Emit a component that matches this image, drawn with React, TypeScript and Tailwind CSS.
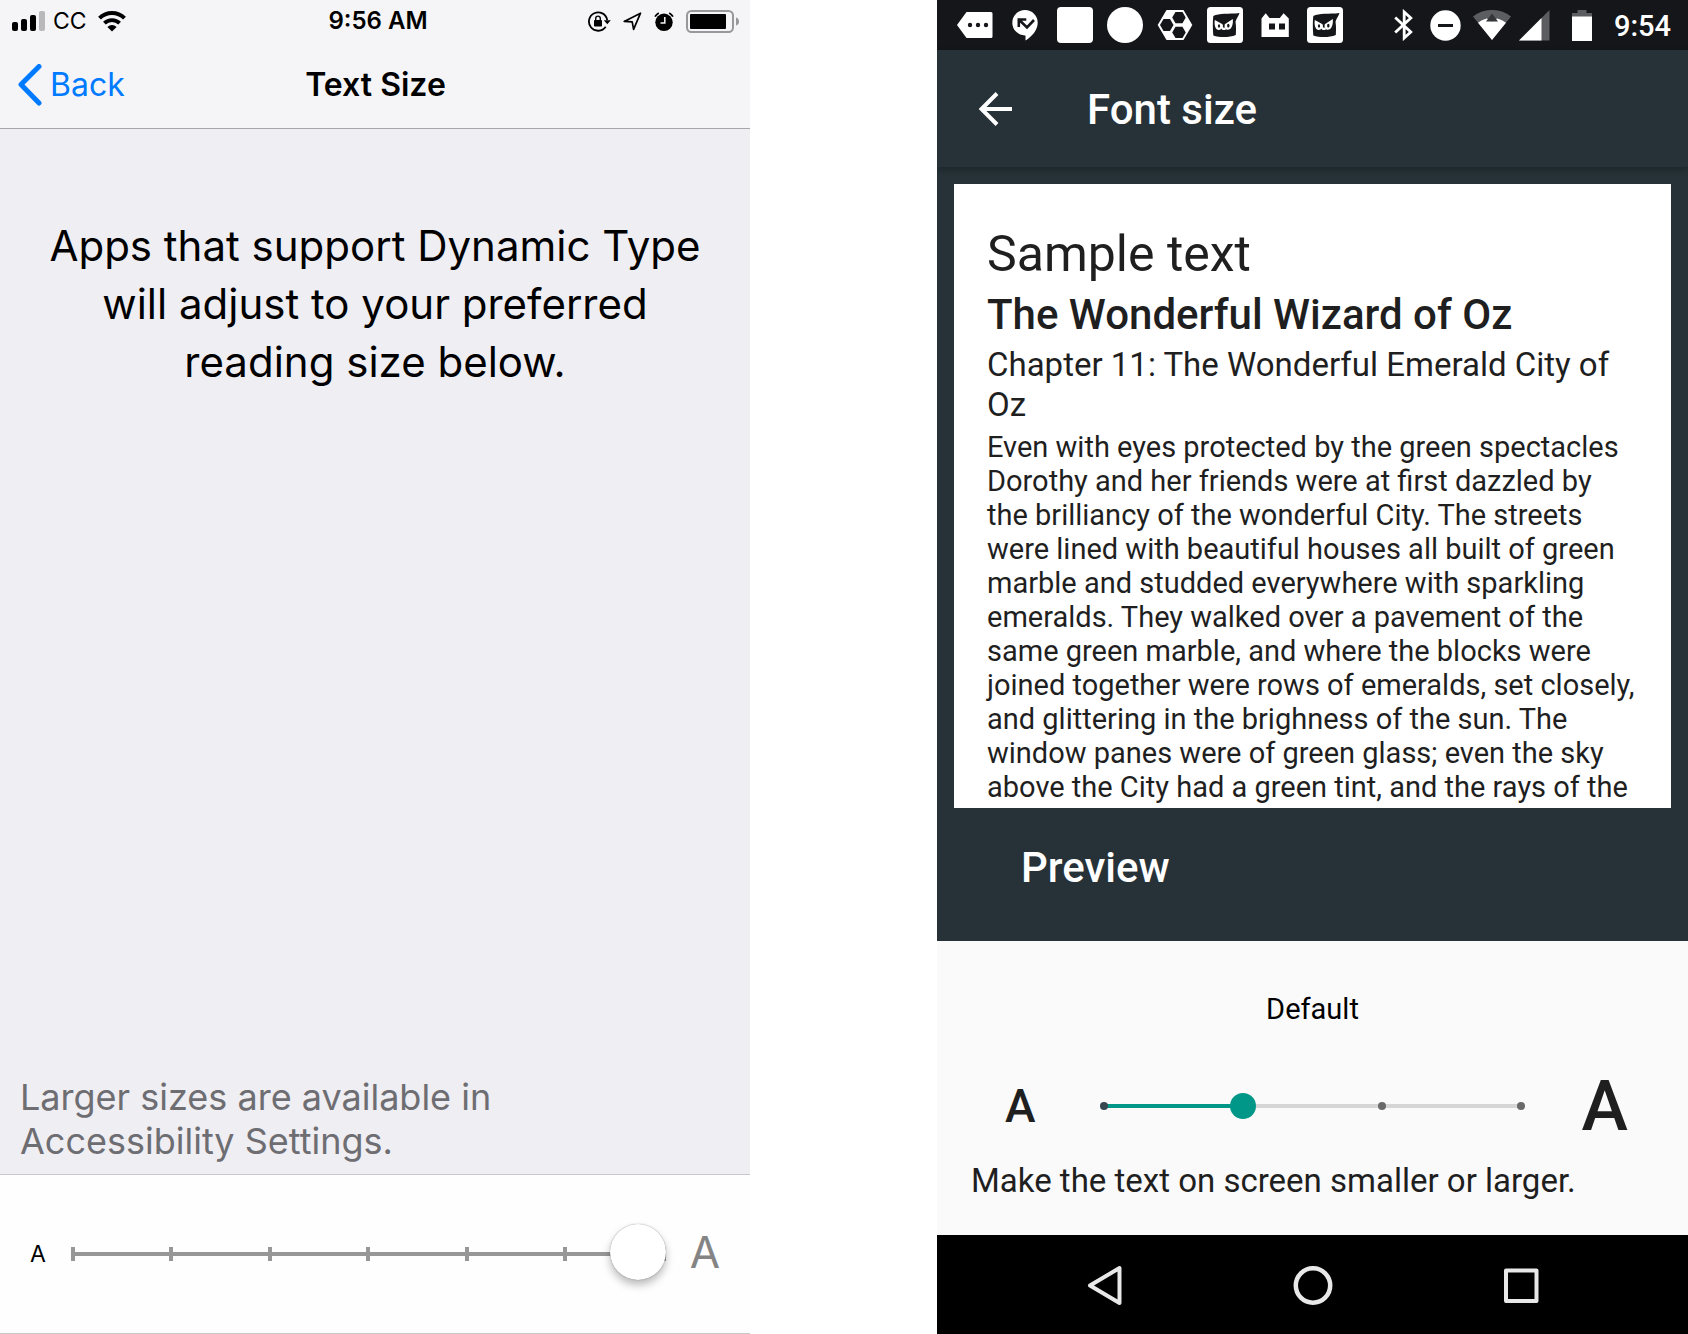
import React from 'react'

const iosFont = 'font-[Inter,"Liberation_Sans",sans-serif]'

const SignalBars = () => (
  <svg width="34" height="20" viewBox="0 0 34 20" aria-hidden="true">
    <rect x="0" y="11" width="6" height="9" rx="2" />
    <rect x="9" y="8" width="6" height="12" rx="2" />
    <rect x="18" y="4" width="6" height="16" rx="2" />
    <rect x="27" y="0" width="6" height="20" rx="2" fill="#b9b9bb" />
  </svg>
)

const WifiIos = () => (
  <svg width="28" height="21" viewBox="0 0 28 21" fill="none" stroke="#000" aria-hidden="true">
    <path d="M1.5 7.2a17.8 17.8 0 0 1 25 0" strokeWidth="4" />
    <path d="M6.4 12.2a10.8 10.8 0 0 1 15.2 0" strokeWidth="3.8" />
    <path d="M14 20.5l-4.6-4.6a6.6 6.6 0 0 1 9.2 0z" fill="#000" stroke="none" />
  </svg>
)

const RotationLock = () => (
  <svg width="23" height="21" viewBox="0 0 23 21" aria-hidden="true">
    <path d="M17.7 15.8A9.2 9.2 0 1 1 19.2 9" fill="none" stroke="#000" strokeWidth="1.8" />
    <path d="M15.8 9.2h7l-3.5 4z" />
    <rect x="6" y="9" width="8" height="6.5" rx="0.8" />
    <path d="M7.7 9.5V7.4a2.3 2.3 0 0 1 4.6 0v2.1" fill="none" stroke="#000" strokeWidth="1.4" />
  </svg>
)

const LocationArrow = () => (
  <svg width="19" height="19" viewBox="0 0 19 19" fill="none" stroke="#000" strokeWidth="1.7" strokeLinejoin="round" aria-hidden="true">
    <path d="M17.5 1.2L1.2 9.4l8 .4 1.4 7.6z" />
  </svg>
)

const AlarmIcon = () => (
  <svg width="20" height="19" viewBox="0 0 20 19" aria-hidden="true">
    <circle cx="10" cy="10.3" r="8.7" />
    <path d="M10.8 5v6H6.5" fill="none" stroke="#f5f5f7" strokeWidth="1.5" />
    <path d="M1 4.6A10 10 0 0 1 4.8 1M19 4.6A10 10 0 0 0 15.2 1" fill="none" stroke="#000" strokeWidth="1.8" />
  </svg>
)

const BatteryIos = () => (
  <svg width="54" height="23" viewBox="0 0 54 23" aria-hidden="true">
    <rect x="1" y="1" width="46" height="21" rx="4.5" fill="none" stroke="#98989a" strokeWidth="2" />
    <rect x="4" y="4" width="36" height="15" rx="1" />
    <path d="M50 7.5c2 .6 3 2 3 4s-1 3.4-3 4z" fill="#98989a" />
  </svg>
)

const iosTicks = [1, 2, 3, 4, 5, 6, 7]

const IosScreen: React.FC = () => (
  <section className={`flex flex-col bg-[#efeef3] text-black ${iosFont}`} aria-label="Text Size">
    <header className="border-b border-[#a7a7ab] bg-[#f5f5f7]">
      <div className="grid h-[42px] grid-cols-[1fr_auto_1fr] items-center pl-3 pr-2.5">
        <div className="flex items-center gap-[7px]">
          <SignalBars />
          <span className="text-[23px] leading-6">CC</span>
          <span className="pl-1">
            <WifiIos />
          </span>
        </div>
        <span className="pl-1 text-[24px] font-semibold leading-6">9:56 AM</span>
        <div className="flex items-center justify-end gap-3">
          <RotationLock />
          <LocationArrow />
          <AlarmIcon />
          <BatteryIos />
        </div>
      </div>
      <div className="grid h-[86px] grid-cols-[1fr_auto_1fr] items-center pl-[17px] pr-4">
        <button type="button" className="flex items-center gap-2 text-[32px] leading-10 text-[#007aff]">
          <svg width="25" height="42" viewBox="0 0 25 42" fill="none" stroke="currentColor" strokeWidth="5" strokeLinecap="round" strokeLinejoin="round" aria-hidden="true">
            <path d="M22 2.5L4 20.500l18 18.500" />
          </svg>
          Back
        </button>
        <h1 className="text-[32px] font-semibold leading-10">Text Size</h1>
      </div>
    </header>

    <p className="px-10 pt-[88px] text-center text-[42px] leading-[58px]">
      Apps that support Dynamic Type
      <br />
      will adjust to your preferred
      <br />
      reading size below.
    </p>

    <p className="mt-auto px-5 pb-[11px] text-[36px] leading-11 text-[#6d6d72]">
      Larger sizes are available in
      <br />
      Accessibility Settings.
    </p>

    <div className="flex h-40 items-center border-y border-[#c8c7cc] bg-[#fefefe] px-[30px]">
      <span className="w-[41px] text-[23px]" aria-hidden="true">A</span>
      <div className="relative flex h-15 flex-1 items-center">
        <div className="absolute inset-x-0 h-1 bg-[#979797]" />
        <div className="absolute inset-x-0 flex justify-between">
          {iosTicks.map((tick) => (
            <span key={tick} className="h-3.5 w-1 bg-[#979797]" />
          ))}
        </div>
        <input
          type="range"
          min="1"
          max="7"
          defaultValue="7"
          aria-label="Text size"
          className="relative h-15 w-full cursor-pointer appearance-none bg-transparent pb-1 [&::-webkit-slider-thumb]:size-14 [&::-webkit-slider-thumb]:appearance-none [&::-webkit-slider-thumb]:rounded-full [&::-webkit-slider-thumb]:bg-white [&::-webkit-slider-thumb]:shadow-[0_0_1px_#00000080,0_5px_8px_#00000045]"
        />
      </div>
      <span className="pb-1 pl-6 text-[44px] text-[#848484]" aria-hidden="true">A</span>
    </div>
  </section>
)

const MessageTag = () => (
  <svg width="36" height="36" viewBox="0 0 36 36" fill="#fff" aria-hidden="true">
    <path d="M9.500 5H34a1.500 1.500 0 0 1 1.500 1.500v23A1.500 1.500 0 0 1 34 31H9.500L0 18z" />
    <g fill="#15161a">
      <circle cx="13" cy="18" r="2.2" />
      <circle cx="21" cy="18" r="2.2" />
      <circle cx="29" cy="18" r="2.2" />
    </g>
  </svg>
)

const MissedCallBubble = () => (
  <svg width="36" height="36" viewBox="0 0 36 36" aria-hidden="true">
    <path d="M18 3A12.700 12.700 0 0 1 30.700 15.700C30.700 23 25 29.500 18.500 33.500V28.400A12.700 12.700 0 0 1 5.300 15.700 12.700 12.700 0 0 1 18 3z" fill="#fff" />
    <path d="M11.800 20v-7.500h7.500M12.300 13l7.700 7.500 7-7.500" fill="none" stroke="#15161a" strokeWidth="2.600" />
  </svg>
)

const Honeycomb = () => (
  <svg width="36" height="36" viewBox="0 0 36 36" aria-hidden="true">
    <path d="M9.500 3h17L35.300 18l-8.800 15h-17L.7 18z" fill="#fff" />
    <g fill="#15161a">
      <path d="M6.500 12h6.500l3.500 6-3.500 6H6.500L3 18z" />
      <path d="M18.500 5h7l3.200 5.600-3.200 5.600h-7l-3.300-5.600z" />
      <path d="M18.500 19.800h7l3.200 5.600-3.200 5.600h-7l-3.300-5.600z" />
    </g>
  </svg>
)

const NinjaIcon = () => (
  <svg width="36" height="36" viewBox="0 0 36 36" aria-hidden="true">
    <rect width="36" height="36" rx="3.5" fill="#fff" />
    <path d="M6.300 9C12 6 22 7.300 32.500 6c-1 3.200-3 5-4 8.700.8 5 .5 9 .3 13.300-6.500 2.600-16 2.600-22.500.5C5.800 22 5.600 15 6.300 9z" fill="#15161a" />
    <path d="M7.800 13l7.800 4.300c.5 3.300-1.300 5.700-3.800 5.700-3.200 0-4.800-4.500-4-10zM25.800 12l-8 5.300c-.8 3.200.6 5.500 3 5.500 3.600 0 5.600-5 5-10.800z" fill="#fff" />
    <path d="M14.500 18c0 3 1.500 5 4 3.300" fill="none" stroke="#fff" strokeWidth="2.200" />
    <ellipse cx="12" cy="19" rx="1.100" ry="1.700" fill="#15161a" />
    <ellipse cx="21.300" cy="18.700" rx="1.200" ry="1.900" fill="#15161a" />
  </svg>
)

const CatIcon = () => (
  <svg width="36" height="36" viewBox="0 0 36 36" aria-hidden="true">
    <path d="M4.500 30V11.500L8.700 6.300 12.500 11h10.300l3.800-4.700 5.200 5.200V30z" fill="#fff" />
    <path d="M12 16.500h6v6h-6zM22 16.500h6v6h-6z" fill="#15161a" />
  </svg>
)

const BluetoothIcon = () => (
  <svg width="20" height="32" viewBox="0 0 20 32" fill="none" stroke="#fff" strokeWidth="2.8" aria-hidden="true">
    <path d="M1.200 8.500L16.800 23l-6.600 6V3l6.600 6L1.200 23.500" />
  </svg>
)

const DoNotDisturb = () => (
  <svg width="31" height="31" viewBox="0 0 31 31" aria-hidden="true">
    <circle cx="15.5" cy="15.5" r="15.2" fill="#fff" />
    <path d="M8 15.500h15" stroke="#15161a" strokeWidth="3" />
  </svg>
)

const WifiAndroid = () => (
  <svg width="38" height="30" viewBox="0 0 38 30" aria-hidden="true">
    <path d="M19 30L0 6.500C11-2.200 27-2.200 38 6.500z" fill="#5c5d60" />
    <path d="M19 30L5 12.700C9 9.800 14 8.500 14 8.500L19 11.500l5-3s5 1.300 9 4.200z" fill="#fff" />
    <path d="M19 3.500l6 8H13z" fill="#35363a" />
  </svg>
)

const CellSignal = () => (
  <svg width="31" height="31" viewBox="0 0 31 31" aria-hidden="true">
    <path d="M30.500 0v30.500H0z" fill="#5c5d60" />
    <path d="M22.500 8v22.500H0z" fill="#fff" />
  </svg>
)

const BatteryAndroid = () => (
  <svg width="20" height="31" viewBox="0 0 20 31" aria-hidden="true">
    <path d="M5.500 0h9v3H20v4H0V3h5.500z" fill="#5c5d60" />
    <path d="M0 6.500h20V31H0z" fill="#fff" />
  </svg>
)

const AndroidScreen: React.FC = () => (
  <section
    className='flex flex-col overflow-hidden bg-[#263238] font-[Roboto,"Noto_Sans",sans-serif] text-[#1f1f1f]'
    aria-label="Font size"
  >
    <div className="flex h-[50px] items-center justify-between bg-[#15161a] pl-5 pr-[17px]">
      <div className="flex items-center gap-3.5">
        <MessageTag />
        <MissedCallBubble />
        <span className="size-9 rounded bg-white" />
        <span className="size-9 rounded-full bg-white" />
        <Honeycomb />
        <NinjaIcon />
        <CatIcon />
        <NinjaIcon />
      </div>
      <div className="flex items-center">
        <BluetoothIcon />
        <span className="pl-4">
          <DoNotDisturb />
        </span>
        <span className="pl-3">
          <WifiAndroid />
        </span>
        <span className="pl-2">
          <CellSignal />
        </span>
        <span className="pl-[22px]">
          <BatteryAndroid />
        </span>
        <span className="pl-[22px] pt-0.5 text-[29px] font-medium leading-8 text-white">9:54</span>
      </div>
    </div>

    <header className="flex h-[117px] items-center px-10 text-white shadow-[0_3px_6px_#00000040]">
      <button type="button" aria-label="Navigate up">
        <svg width="36" height="36" viewBox="0 0 36 36" fill="none" stroke="currentColor" strokeWidth="4" aria-hidden="true">
          <path d="M35 18H4M20 2.500L4.500 18 20 33.500" />
        </svg>
      </button>
      <h1 className="pl-[74px] pt-0.5 text-[42px] font-medium leading-12">Font size</h1>
    </header>

    <div className="mx-[17px] mt-[17px] h-[624px] overflow-hidden bg-white px-[33px] pt-10">
      <h2 className="text-[50px] leading-[60px]">Sample text</h2>
      <h3 className="pt-[5px] text-[42px] font-medium leading-[52px]">The Wonderful Wizard of Oz</h3>
      <p className="pt-1 text-[33px] leading-10">Chapter 11: The Wonderful Emerald City of Oz</p>
      <p className="pt-[5px] text-[29px] leading-[34px]">
        Even with eyes protected by the green spectacles Dorothy and her friends were at first dazzled by the brilliancy
        of the wonderful City. The streets were lined with beautiful houses all built of green marble and studded
        everywhere with sparkling emeralds. They walked over a pavement of the same green marble, and where the blocks
        were joined together were rows of emeralds, set closely, and glittering in the brighness of the sun. The window
        panes were of green glass; even the sky above the City had a green tint, and the rays of the
      </p>
    </div>
    <p className="px-[84px] pb-[43px] pt-[30px] text-[42px] font-medium leading-[60px] text-white">Preview</p>

    <div className="flex flex-1 flex-col bg-[#fafafa]">
      <p className="pt-12 text-center text-[29px] leading-10 text-black">Default</p>
      <div className="flex h-28 items-center pl-[68px] pr-[60px] pt-[42px] font-medium">
        <span className="w-[86px] text-[46px] leading-none" aria-hidden="true">A</span>
        <div className="relative flex h-8 flex-1 items-center">
          <div className="absolute inset-x-3 h-1 bg-[#d6d6d6]" />
          <div className="absolute left-3 h-1 w-1/3 bg-[#009688]" />
          <div className="absolute inset-x-[9px] flex justify-between">
            <span className="size-2 rounded-full bg-[#37474f]" />
            <span className="size-2" />
            <span className="size-2 rounded-full bg-[#6a6a6a]" />
            <span className="size-2 rounded-full bg-[#6a6a6a]" />
          </div>
          <input
            type="range"
            min="0"
            max="3"
            defaultValue="1"
            aria-label="Font size"
            className="relative h-8 w-full cursor-pointer appearance-none bg-transparent [&::-webkit-slider-thumb]:size-[26px] [&::-webkit-slider-thumb]:appearance-none [&::-webkit-slider-thumb]:rounded-full [&::-webkit-slider-thumb]:bg-[#009688]"
          />
        </div>
        <span className="pl-12 text-[70px] leading-none" aria-hidden="true">A</span>
      </div>
      <p className="px-[34px] pt-5 text-[33px] leading-10">Make the text on screen smaller or larger.</p>
    </div>

    <nav className="flex h-[99px] items-center justify-center gap-40 bg-black text-[#e8e8e8]" aria-label="System">
      <button type="button" aria-label="Back">
        <svg width="48" height="48" viewBox="0 0 48 48" fill="none" stroke="currentColor" strokeWidth="4" strokeLinejoin="round" aria-hidden="true">
          <path d="M38.500 7v35L9 24.500z" />
        </svg>
      </button>
      <button type="button" aria-label="Home">
        <svg width="48" height="48" viewBox="0 0 48 48" fill="none" stroke="currentColor" strokeWidth="4.5" aria-hidden="true">
          <circle cx="24" cy="24.5" r="17.2" />
        </svg>
      </button>
      <button type="button" aria-label="Overview">
        <svg width="48" height="48" viewBox="0 0 48 48" fill="none" stroke="currentColor" strokeWidth="4" strokeLinejoin="round" aria-hidden="true">
          <rect x="9" y="9.5" width="30.5" height="30.5" />
        </svg>
      </button>
    </nav>
  </section>
)

const App: React.FC = () => {
  return (
    <main className="grid min-h-screen grid-cols-[750fr_187fr_751fr] bg-white">
      <IosScreen />
      <div />
      <AndroidScreen />
    </main>
  )
}

export default App
